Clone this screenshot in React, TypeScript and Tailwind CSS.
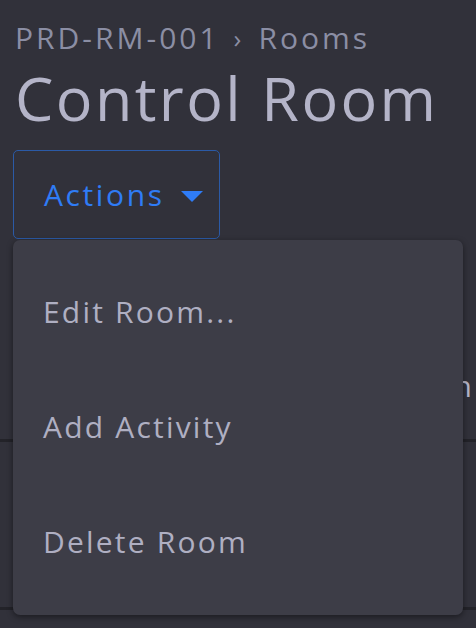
import { useState } from "react"

const items = ["Edit Room...", "Add Activity", "Delete Room"]

export default function App() {
  const [open] = useState(true)

  return (
    <div className="relative min-h-[628px] w-[476px] overflow-hidden bg-[#31313a] font-['Open_Sans',sans-serif]">
      <div className="px-[15px] pt-[18px]">
        <div className="flex items-center gap-[14px] text-[30px] leading-[40px] text-[#8b8ea4] tracking-[3px]">
          <span>PRD-RM-001</span>
          <span className="text-[26px]">›</span>
          <span>Rooms</span>
        </div>
        <h1 className="mt-[2px] text-[61px] leading-[76px] text-[#b4b4c8] tracking-[2.4px]">Control Room</h1>
      </div>

      <div className="relative ml-[13px] mt-[14px] w-[207px]">
        <button className="flex h-[89px] w-[207px] items-center gap-[16px] rounded-[5px] border border-[#2b5aa6] pl-[30px] text-[30px] text-[#2f7cf6] tracking-[2.6px] outline-none">
          <span>Actions</span>
          <svg width="22" height="12" viewBox="0 0 22 12" className="mt-[4px]">
            <path d="M0 0 H22 L11 11 Z" fill="#2f7cf6" />
          </svg>
        </button>
      </div>

      <div className="mt-[101px] flex h-[102px] items-start justify-end border-b-[3px] border-[#232329] pr-[4px]">
        <span className="mt-[26px] text-[30px] leading-[40px] text-[#b4b4c8]">Location</span>
      </div>
      <div className="mt-[165px] h-[3px] bg-[#232329]" />

      {open && (
        <div className="absolute left-[13px] top-[240px] w-[450px] rounded-[7px] bg-[#3d3d47] pt-[14px] pb-[16px] shadow-[0_2px_6px_rgba(0,0,0,0.45)]">
          {items.map((item) => (
            <div key={item} className="flex h-[115px] items-center px-[30px] text-[30px] text-[#afafc2] tracking-[2.2px]">
              {item}
            </div>
          ))}
        </div>
      )}
    </div>
  )
}
